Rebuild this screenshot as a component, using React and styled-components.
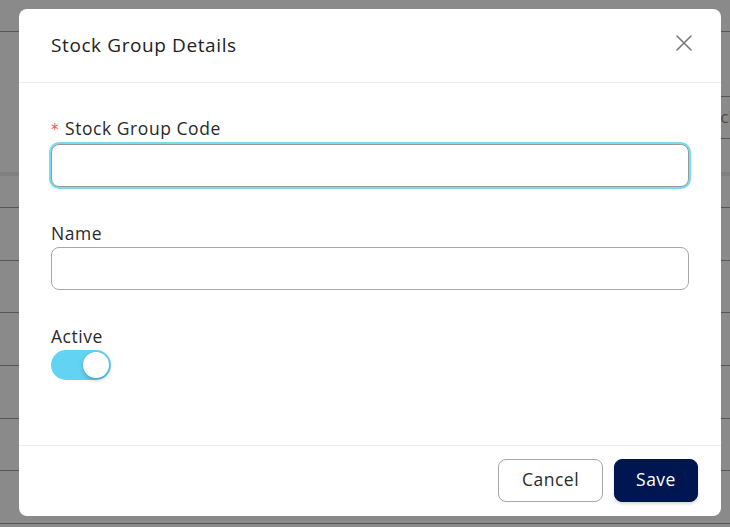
import React from "react";
import styled, { createGlobalStyle } from "styled-components";

const Global = createGlobalStyle`
  html, body { margin: 0; padding: 0; }
  body { font-family: "Open Sans", "Noto Sans", sans-serif; overflow: hidden; }
  * { box-sizing: border-box; }
`;

const Page = styled.div`
  position: relative;
  width: 730px;
  height: 527px;
  background: #fff;
  overflow: hidden;
`;

const TopBar = styled.div`
  height: 32px;
  border-bottom: 1px solid #a0a0a0;
`;

const Toolbar = styled.div`
  height: 140px;
  display: flex;
  justify-content: flex-end;
  align-items: flex-start;
  padding-top: 64px;
`;

const SearchBox = styled.div`
  width: 90px;
  height: 43px;
  margin-right: -26px;
  border-top: 1px solid #a0a0a0;
  border-bottom: 1px solid #a0a0a0;
  border-left: 1px solid #a0a0a0;
  display: flex;
  align-items: center;
  padding: 0 0 2px 18px;
  color: #8a8a8a;
  font-size: 17px;
  white-space: nowrap;
`;

const TableHead = styled.div`
  height: 36px;
  border-top: 4px solid #ececec;
  border-bottom: 1px solid #a0a0a0;
`;

const TableRow = styled.div`
  height: 52.7px;
  border-bottom: 1px solid #a0a0a0;
`;

const Overlay = styled.div`
  position: absolute;
  inset: 0;
  background: rgba(0, 0, 0, 0.46);
`;

const Modal = styled.div`
  position: absolute;
  left: 19px;
  top: 9px;
  width: 702px;
  height: 507px;
  background: #fff;
  border-radius: 8px;
  display: flex;
  flex-direction: column;
  overflow: hidden;
`;

const Header = styled.div`
  height: 74px;
  flex: none;
  border-bottom: 1px solid #ececec;
  display: flex;
  align-items: center;
  justify-content: space-between;
  padding: 0 28px 0 32px;
`;

const Title = styled.h2`
  margin: 0;
  font-size: 19px;
  font-weight: 500;
  color: #222;
  letter-spacing: 0.6px;
  margin-top: -2px;
`;

const CloseButton = styled.button`
  border: none;
  background: none;
  padding: 0;
  width: 18px;
  height: 18px;
  display: flex;
  align-items: center;
  justify-content: center;
  cursor: pointer;
  margin-top: -6px;
`;

const Body = styled.div`
  flex: 1;
  padding: 30px 32px 0 32px;
  display: flex;
  flex-direction: column;
  gap: 34px;
`;

const Field = styled.div`
  display: flex;
  flex-direction: column;
`;

const Label = styled.label`
  font-size: 17.5px;
  line-height: 24px;
  letter-spacing: 0.55px;
  color: #2a2a2a;
  margin-bottom: ${(p) => p.$gap ?? 2}px;
  display: flex;
  align-items: center;
`;

const Star = styled.span`
  color: #ff4d4f;
  font-size: 15px;
  margin-right: 6px;
  margin-top: 5px;
  font-family: "DejaVu Sans", sans-serif;
`;

const Input = styled.input`
  height: 43px;
  width: 100%;
  border-radius: 8px;
  border: 1px solid ${(p) => (p.$focused ? "#9a9a9a" : "#a8a8a8")};
  box-shadow: ${(p) => (p.$focused ? "0 0 0 2px rgba(99, 211, 240, 0.85)" : "none")};
  outline: none;
  font-family: inherit;
  font-size: 16px;
  padding: 0 12px;
  background: #fff;
`;

const Toggle = styled.div`
  width: 60px;
  height: 30px;
  border-radius: 15px;
  background: #62d3f3;
  display: flex;
  align-items: center;
  justify-content: flex-end;
  padding: 0 2px;
`;

const Knob = styled.div`
  width: 26px;
  height: 26px;
  border-radius: 50%;
  background: #fff;
  box-shadow: 0 2px 4px rgba(0, 0, 0, 0.25);
`;

const Footer = styled.div`
  flex: none;
  height: 71px;
  border-top: 1px solid #ececec;
  display: flex;
  align-items: center;
  justify-content: flex-end;
  gap: 11px;
  padding: 0 23px 2px 0;
`;

const Button = styled.button`
  height: 43px;
  border-radius: 8px;
  font-family: inherit;
  font-size: 17.5px;
  letter-spacing: 0.5px;
  cursor: pointer;
  padding: 0 0 3px 0;
  width: ${(p) => p.$w}px;
  border: 1px solid ${(p) => (p.$primary ? "#001650" : "#a8a8a8")};
  background: ${(p) => (p.$primary ? "#001650" : "#fff")};
  color: ${(p) => (p.$primary ? "#fff" : "#2a2a2a")};
  font-weight: ${(p) => (p.$primary ? 500 : 400)};
  box-shadow: ${(p) => (p.$primary ? "0 2px 3px rgba(0,0,0,0.15)" : "none")};
`;

export default function App() {
  return (
    <>
      <Global />
      <Page>
        <TopBar />
        <Toolbar>
          <SearchBox>Search</SearchBox>
        </Toolbar>
        <TableHead />
        {Array.from({ length: 6 }).map((_, i) => (
          <TableRow key={i} />
        ))}
        <Overlay />
        <Modal>
          <Header>
            <Title>Stock Group Details</Title>
            <CloseButton aria-label="Close">
              <svg width="16" height="16" viewBox="0 0 16 16">
                <path d="M1 1 L15 15 M15 1 L1 15" stroke="#7a7a7a" strokeWidth="1.6" strokeLinecap="round" />
              </svg>
            </CloseButton>
          </Header>
          <Body>
            <Field>
              <Label>
                <Star>*</Star>Stock Group Code
              </Label>
              <Input $focused />
            </Field>
            <Field>
              <Label>Name</Label>
              <Input />
            </Field>
            <Field>
              <Label $gap={2}>Active</Label>
              <Toggle>
                <Knob />
              </Toggle>
            </Field>
          </Body>
          <Footer>
            <Button $w={105}>Cancel</Button>
            <Button $w={84} $primary>
              Save
            </Button>
          </Footer>
        </Modal>
      </Page>
    </>
  );
}
